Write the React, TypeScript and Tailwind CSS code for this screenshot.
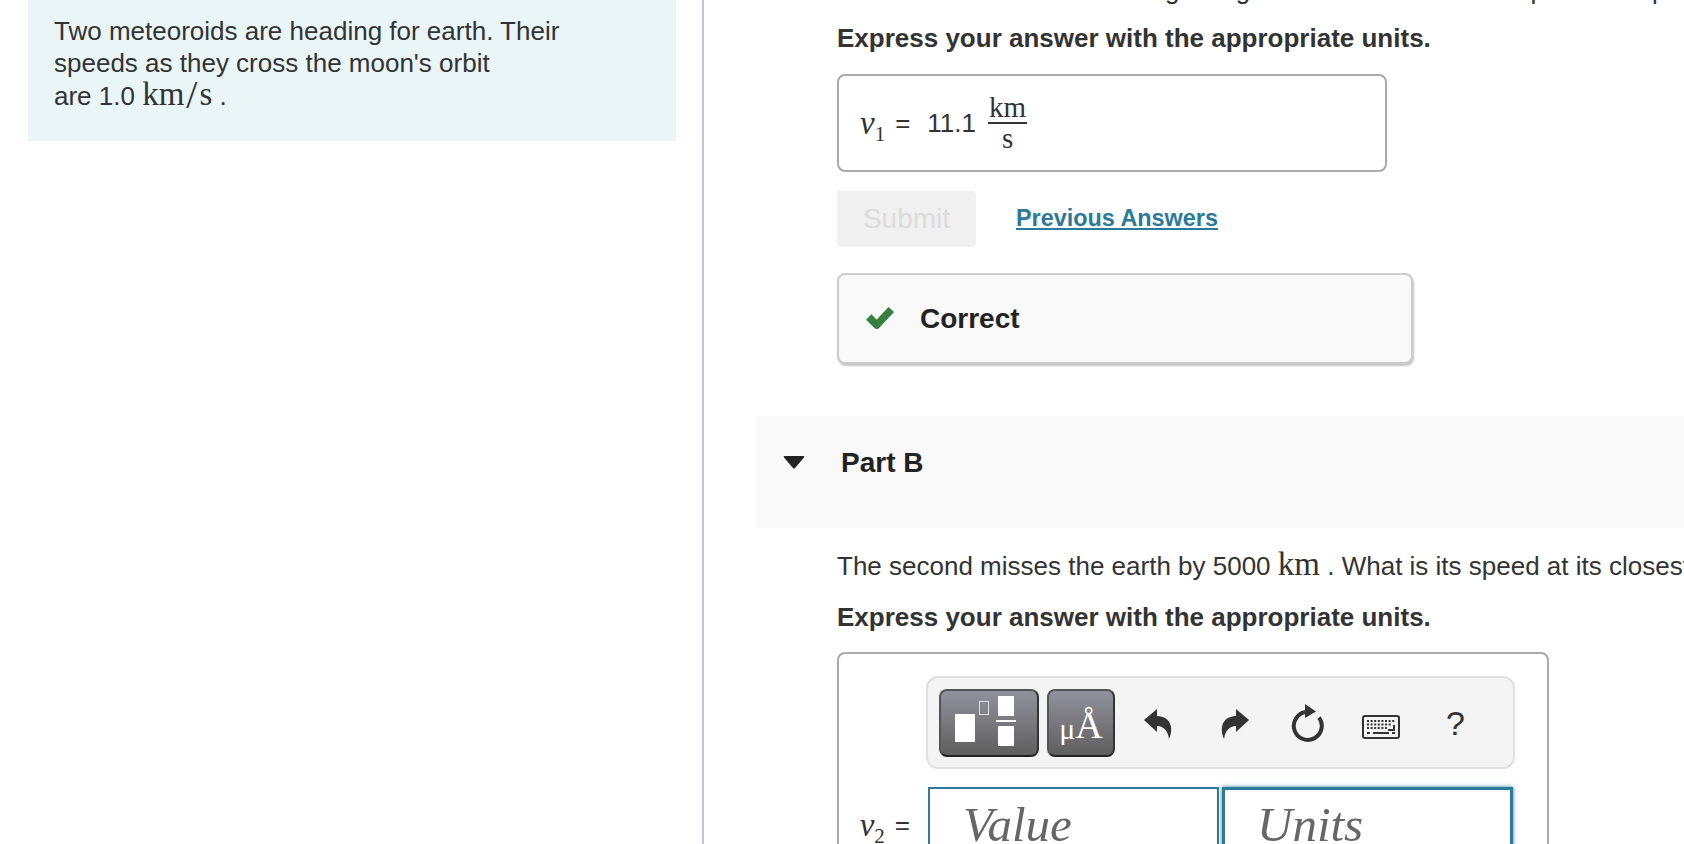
const sans = "font-['Liberation_Sans',Arial,sans-serif]";
const toolButton = "rounded-lg border-2 border-[#555] border-r-[#333] border-b-[#222] bg-gradient-to-b from-[#92929c] to-[#5f5f5f]";

const UndoIcon = ({ flip }: { flip?: boolean }) => (
  <svg width="28" height="30" viewBox="0 0 28 30" className={flip ? "-scale-x-100" : ""}>
    <path d="M0 11 L13 0 V7 C24 7 31 16 25 30 C24 22 20 17.5 13 17 V23 Z" fill="#333" />
  </svg>
);

const ReloadIcon = () => (
  <svg width="34" height="38" viewBox="0 0 34 38">
    <path d="M15 8 A14 14 0 1 0 28 13.5" fill="none" stroke="#333" strokeWidth="4" />
    <path d="M14 0 L25 7.5 L14 14 Z" fill="#333" />
  </svg>
);

const KeyboardIcon = () => (
  <svg width="38" height="24" viewBox="0 0 38 24">
    <rect x="1" y="1" width="36" height="22" rx="2" fill="none" stroke="#333" strokeWidth="2" />
    <path d="M5 6h28M5 9.5h24M5 13h20" stroke="#333" strokeWidth="2" strokeDasharray="2 1.6" />
    <path d="M32 10v5h-6" stroke="#333" strokeWidth="2" fill="none" />
    <path d="M5 18h3M11 18h16M30 18h3" stroke="#333" strokeWidth="2" />
  </svg>
);

const TemplatesGlyph = () => (
  <svg width="62" height="52" viewBox="0 0 62 52" className="-ml-[6px] -mt-[3px]">
    <rect x="0" y="19" width="20" height="28" fill="#fff" />
    <rect x="24.5" y="6.5" width="9" height="13" fill="none" stroke="#ddd" />
    <rect x="43" y="1" width="16" height="20" fill="#fff" />
    <rect x="41" y="25" width="20" height="2" fill="#fff" />
    <rect x="43" y="31" width="16" height="20" fill="#fff" />
  </svg>
);

const Variable = ({ n }: { n: number }) => (
  <span className="font-['Liberation_Serif',serif] text-[33px] leading-none italic">
    v<sub className="text-[21px] not-italic align-[-2px] leading-none">{n}</sub>
  </span>
);

export default function App() {
  return (
    <div className={`flex h-[844px] overflow-hidden bg-white text-[26px] leading-8 text-[#333] ${sans}`}>
      <div className="w-[704px] shrink-0 border-r-2 border-[#b5c9dd]">
        <div className="ml-7 h-[141px] w-[648px] bg-[#e9f5f7] px-[26px] pt-[15px]">
          <p>Two meteoroids are heading for earth. Their</p>
          <p>speeds as they cross the moon's orbit</p>
          <p className="mt-px">
            are 1.0{" "}
            <span className="font-['Liberation_Serif',serif] text-[33px] leading-[0]">
              km<span className="mx-[2px] align-[-3px] text-[40px] font-light leading-[0]">/</span>s
            </span>{" "}
            .
          </p>
        </div>
      </div>

      <div className="min-w-0 flex-1 pl-[52px]">
        <div className="-mt-[26px] pl-[81px]">
          <p className="whitespace-nowrap">The first meteoroid is heading straight for earth. What is its speed of impact?</p>
          <p className="mt-4 font-bold">Express your answer with the appropriate units.</p>

          <div className="mt-5 flex h-[98px] w-[550px] items-center rounded-lg border-2 border-[#aaa] pl-[21px]">
            <Variable n={1} />
            <span className="ml-[10px]">=</span>
            <span className="ml-[17px]">11.1</span>
            <span className="ml-3 flex flex-col items-center font-['Liberation_Serif',serif] text-[29px] leading-[29px]">
              <span className="border-b-2 border-[#333] px-px">km</span>
              <span>s</span>
            </span>
          </div>

          <div className="mt-[19px] flex items-center">
            <button className="h-14 w-[139px] rounded bg-[#f0f0f0] text-[28px] text-[#dcdcdc]">Submit</button>
            <a className="ml-10 -mt-[2px] text-[23.4px] font-bold text-[#2b7a9b] underline">Previous Answers</a>
          </div>

          <div className="mt-[26px] flex h-[91px] w-[576px] items-center rounded-lg border-2 border-[#ccc] bg-[#f9f9f9] pl-[26px] font-bold text-[#222] shadow-[1px_2px_2px_#c4c4c4]">
            <svg width="30" height="24" viewBox="0 0 28 22" className="-mt-[4px]">
              <path d="M3.5 11 L11 18.5 L24.5 4" fill="none" stroke="#35803f" strokeWidth="7" strokeLinejoin="round" />
            </svg>
            <span className="ml-[25px] text-[28px]">Correct</span>
          </div>
        </div>

        <div className="mt-[52px] flex h-28 items-start bg-[#f9f9f9] pl-[27px] pt-[31px] font-bold text-[#222]">
          <svg width="22" height="13" viewBox="0 0 22 13" className="mt-[9px]">
            <path d="M1.5 0 H20.5 Q22 0 21 1.5 L12 12 Q11 13 10 12 L1 1.5 Q0 0 1.5 0 Z" fill="#222" />
          </svg>
          <span className="ml-9 text-[28px]">Part B</span>
        </div>

        <div className="pl-[81px]">
          <p className="mt-[22px] whitespace-nowrap">
            The second misses the earth by 5000{" "}
            <span className="font-['Liberation_Serif',serif] text-[33px] leading-[0]">km</span> . What is its speed at its closest point?
          </p>
          <p className="mt-[19px] font-bold">Express your answer with the appropriate units.</p>

          <div className="mt-[19px] h-[260px] w-[712px] rounded-lg border-2 border-[#aaa] pl-[87px] pt-[22px]">
            <div className="flex h-[93px] w-[589px] items-center rounded-xl border-2 border-[#e0e0e0] bg-[#f4f4f4] pl-[11px]">
              <button className={`flex h-[68px] w-[100px] items-center justify-center ${toolButton}`}>
                <TemplatesGlyph />
              </button>
              <button className={`ml-2 flex h-[68px] w-[68px] items-end justify-center pb-[11px] font-['Liberation_Serif',serif] text-white ${toolButton}`}>
                <span className="text-[30px] leading-none">μ</span>
                <span className="text-[38px] leading-none">Å</span>
              </button>
              <span className="ml-[29px] mt-[2px]"><UndoIcon /></span>
              <span className="ml-[49px] mt-[2px]"><UndoIcon flip /></span>
              <span className="ml-[42px]"><ReloadIcon /></span>
              <span className="ml-[37px] mt-2"><KeyboardIcon /></span>
              <span className="ml-[46px] text-[34px]">?</span>
            </div>

            <div className="-ml-[87px] mt-[18px] flex">
              <div className="flex w-[89px] items-start justify-end pr-[18px] pt-[22px]">
                <Variable n={2} />
                <span className="ml-[10px]">=</span>
              </div>
              <div className="h-20 w-[291px] border-2 border-[#2b7a9b] pl-[33px] pt-[8px] font-['Liberation_Serif',serif] text-[49px] leading-[56px] text-[#666] italic">
                Value
              </div>
              <div className="ml-[3px] h-20 w-[291px] border-[3px] border-[#2b7a9b] pl-8 pt-[7px] font-['Liberation_Serif',serif] text-[49px] leading-[56px] text-[#666] italic shadow-[0_0_4px_#2b7a9b]">
                Units
              </div>
            </div>
          </div>
        </div>
      </div>
    </div>
  );
}
